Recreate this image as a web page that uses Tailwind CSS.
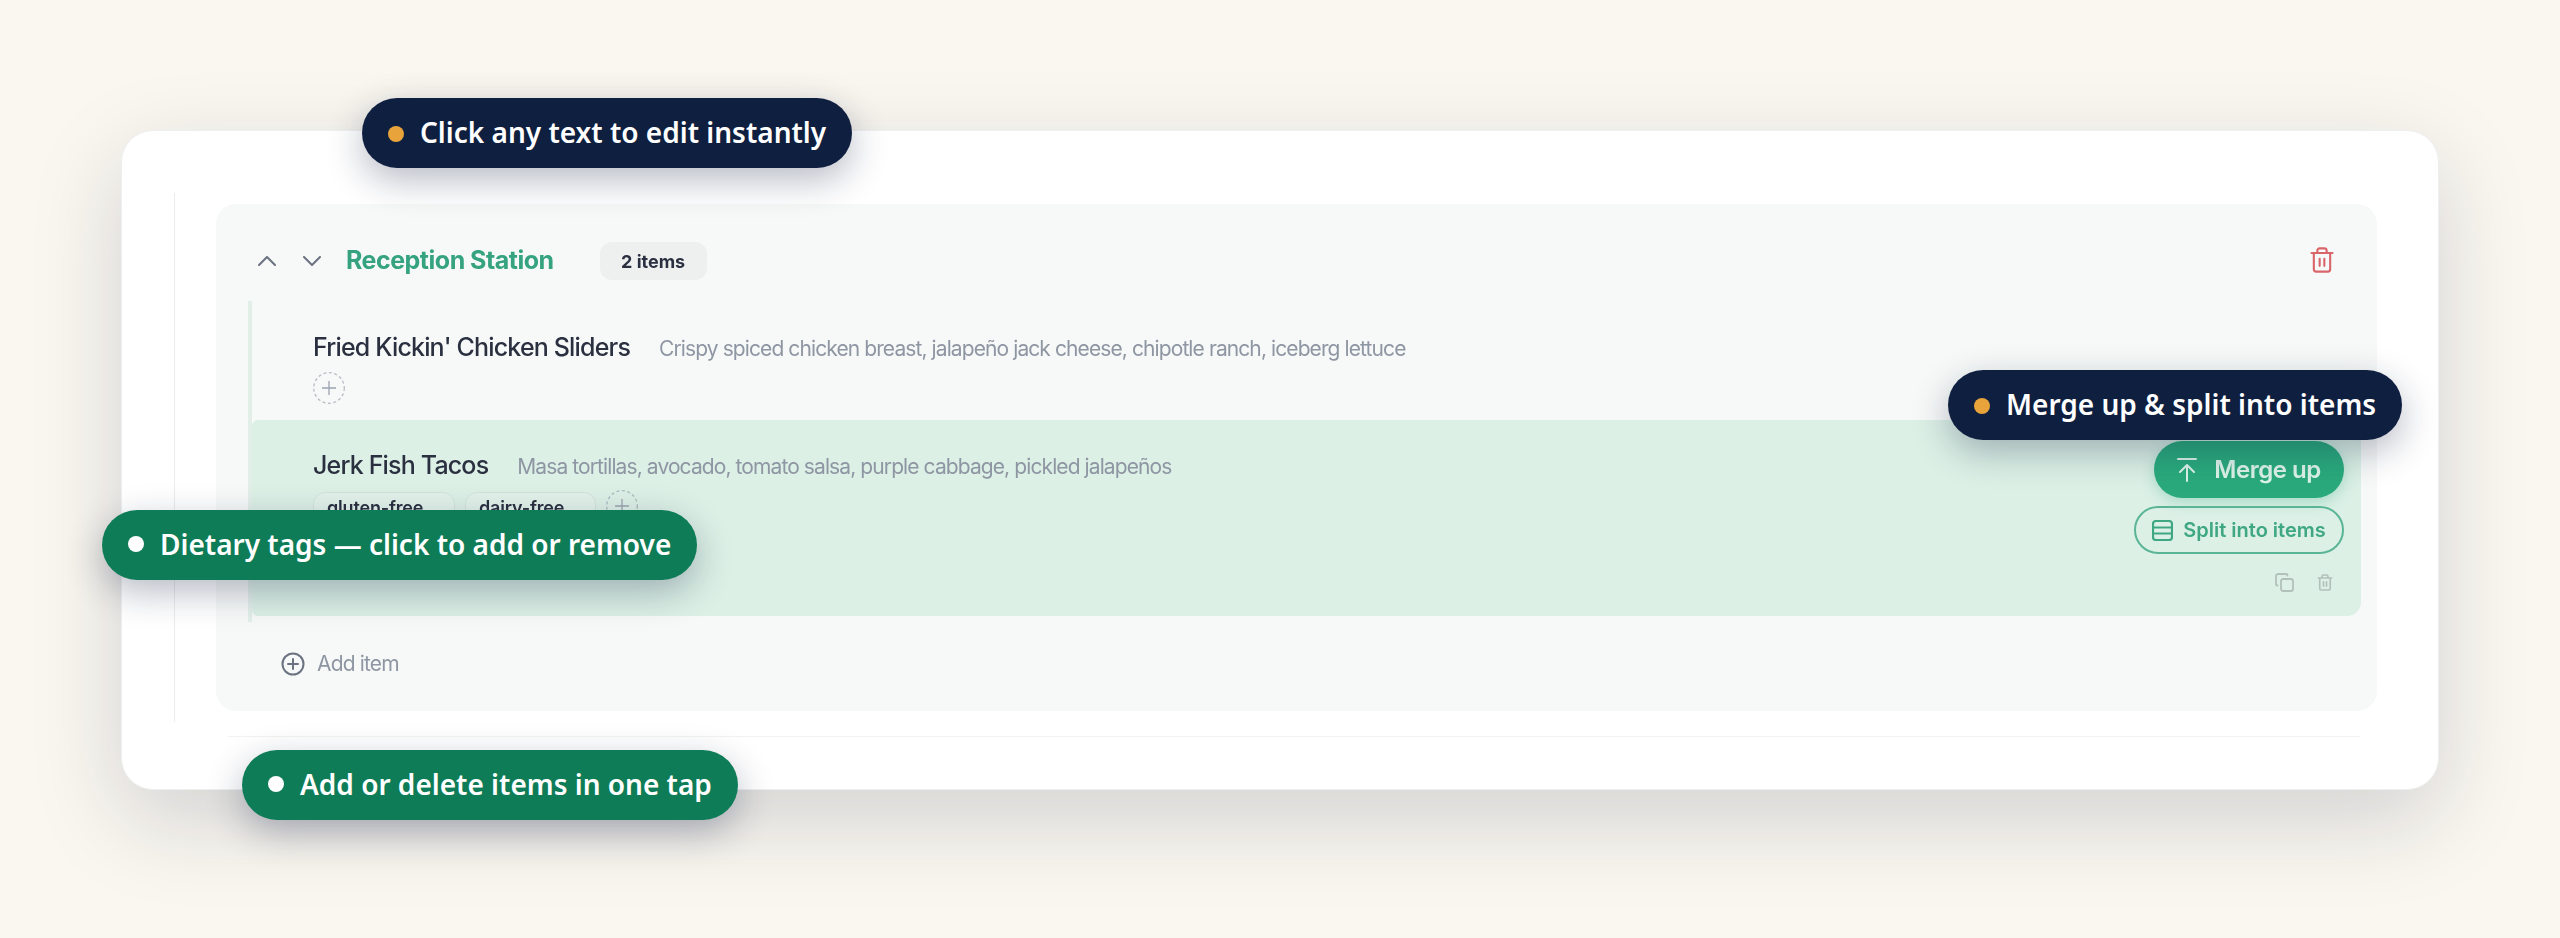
<!DOCTYPE html>
<html lang="en">
  <head>
    <meta charset="UTF-8" />
    <title>Menu editor</title>
    <script src="https://cdn.jsdelivr.net/npm/@tailwindcss/browser@4"></script>
  </head>
  <body class="bg-[#faf7f0] font-['Inter',sans-serif]">
    <main class="relative h-[938px] w-[2560px] overflow-hidden pt-[130px] pl-[121px]">
      <!-- card -->
      <section class="h-[660px] w-[2318px] rounded-[32px] border border-[#eeeff0] bg-white pt-[62px] pl-[52px] shadow-[0_30px_90px_rgba(15,31,64,0.17)]">
        <div class="blur-[0.6px]">
          <div class="h-[529px] w-[2200px] border-l border-[#ececec] pt-[11px] pl-[41px]">
            <div class="h-[507px] w-[2161px] rounded-[20px] bg-[#f7f9f8]">
              <!-- station header -->
              <header class="flex h-[97px] items-center pt-[17px] pr-[41px] pl-[42px]">
                <svg class="h-[10px] w-[18px] text-[#6b7280]" viewBox="0 0 18 10" fill="none" stroke="currentColor" stroke-width="2" stroke-linecap="round" stroke-linejoin="round"><path d="M1 9l8-8 8 8" /></svg>
                <svg class="ml-[27px] h-[10px] w-[18px] text-[#6b7280]" viewBox="0 0 18 10" fill="none" stroke="currentColor" stroke-width="2" stroke-linecap="round" stroke-linejoin="round"><path d="M1 1l8 8 8-8" /></svg>
                <h2 class="ml-[25px] text-[25px] font-bold tracking-[-0.02em] text-[#35a37f]">Reception Station</h2>
                <span class="ml-[46px] flex h-[38px] w-[107px] items-center justify-center rounded-[12px] bg-[#eef0f0] text-[18px] font-bold text-[#2b3040]">2 items</span>
                <svg class="-mt-[2px] ml-auto h-[28px] w-[28px] text-[#d9656a]" viewBox="0 0 24 24" fill="none" stroke="currentColor" stroke-width="1.8" stroke-linecap="round" stroke-linejoin="round"><path d="M3 6h18M5 6v14a2 2 0 0 0 2 2h10a2 2 0 0 0 2-2V6M8 6V4a2 2 0 0 1 2-2h4a2 2 0 0 1 2 2v2M10 11v6M14 11v6" /></svg>
              </header>

              <!-- items -->
              <div class="ml-[32px] h-[321px] w-[2113px] border-l-4 border-[#e2efe9]">
                <div class="h-[119px] pt-[30px] pl-[61px]">
                  <div class="flex items-baseline gap-[29px]">
                    <h3 class="text-[25px] leading-[32px] font-medium tracking-[-0.033em] text-[#2b3040]">Fried Kickin' Chicken Sliders</h3>
                    <p class="text-[21px] tracking-[-0.043em] text-[#8f96a3]">Crispy spiced chicken breast, jalapeño jack cheese, chipotle ranch, iceberg lettuce</p>
                  </div>
                  <button class="mt-[7px] block h-[32px] w-[32px] text-[#9ca3af]">
                    <svg class="h-[32px] w-[32px]" viewBox="0 0 32 32" fill="none" stroke="currentColor" stroke-width="1.3"><circle cx="16" cy="16" r="15.300" stroke-dasharray="3 2.500" class="opacity-70" /><path d="M16 9v14M9 16h14" /></svg>
                  </button>
                </div>

                <div class="flex h-[196px] w-[2109px] justify-between rounded-l-[6px] rounded-r-[14px] bg-[#dcf0e6] pt-[21px] pr-[17px] pl-[61px]">
                  <div class="pt-[8px]">
                    <div class="flex items-baseline gap-[29px]">
                      <h3 class="text-[25px] leading-[32px] font-medium tracking-[-0.033em] text-[#2b3040]">Jerk Fish Tacos</h3>
                      <p class="text-[21px] tracking-[-0.043em] text-[#8f96a3]">Masa tortillas, avocado, tomato salsa, purple cabbage, pickled jalapeños</p>
                    </div>
                    <div class="mt-[9px] flex items-start gap-[10px]">
                      <span class="flex h-[36px] w-[142px] items-center rounded-[12px] border border-[#d0e4da] bg-[#e2f2ea] pb-[4px] pl-[13px] text-[18px] font-semibold tracking-[-0.01em] text-[#2b3040]">gluten-free</span>
                      <span class="flex h-[36px] w-[131px] items-center rounded-[12px] border border-[#d0e4da] bg-[#e2f2ea] pb-[4px] pl-[13px] text-[18px] font-semibold tracking-[-0.01em] text-[#2b3040]">dairy-free</span>
                      <button class="-mt-[2px] block h-[32px] w-[32px] text-[#9ca3af]">
                        <svg class="h-[32px] w-[32px]" viewBox="0 0 32 32" fill="none" stroke="currentColor" stroke-width="1.3"><circle cx="16" cy="16" r="15.300" stroke-dasharray="3 2.500" class="opacity-70" /><path d="M16 9v14M9 16h14" /></svg>
                      </button>
                    </div>
                  </div>

                  <div class="flex flex-col items-end">
                    <button class="flex h-[57px] w-[190px] items-center justify-center gap-[17px] rounded-full bg-[#2aaa7c] text-[24px] font-semibold tracking-[-0.02em] text-[#dcf3e9] shadow-[0_4px_14px_rgba(42,170,124,0.3)]">
                      <svg class="h-[24px] w-[20px]" viewBox="0 0 20 24" fill="none" stroke="currentColor" stroke-width="2" stroke-linecap="round" stroke-linejoin="round"><path d="M1 1h18M10 23V7M3 14l7-7 7 7" /></svg>
                      Merge up
                    </button>
                    <button class="mt-[8px] flex h-[48px] w-[210px] items-center justify-center gap-[10px] rounded-full border-2 border-[#5ab596] text-[20px] font-semibold text-[#3fa883]">
                      <svg class="h-[21px] w-[21px]" viewBox="0 0 21 21" fill="none" stroke="currentColor" stroke-width="2.2" stroke-linejoin="round"><rect x="1" y="1" width="19" height="19" rx="3" /><path d="M1 7.5h19M1 13.5h19" /></svg>
                      Split into items
                    </button>
                    <div class="mt-[19px] mr-[10px] flex gap-[22px] text-[#b2c0ba]">
                      <svg class="h-[19px] w-[19px]" viewBox="0 0 19 19" fill="none" stroke="currentColor" stroke-width="1.8" stroke-linejoin="round" stroke-linecap="round"><rect x="6" y="6" width="12" height="12" rx="2" /><path d="M2.5 12.5C1.5 12.5 1 12 1 11V3a2 2 0 0 1 2-2h8c1 0 1.500.5 1.500 1.500" /></svg>
                      <svg class="h-[19px] w-[18px]" viewBox="0 0 24 24" fill="none" stroke="currentColor" stroke-width="2.2" stroke-linecap="round" stroke-linejoin="round"><path d="M3 6h18M5 6v14a2 2 0 0 0 2 2h10a2 2 0 0 0 2-2V6M8 6V4a2 2 0 0 1 2-2h4a2 2 0 0 1 2 2v2M10 11v6M14 11v6" /></svg>
                    </div>
                  </div>
                </div>
              </div>

              <!-- add item -->
              <button class="mt-[26px] ml-[65px] flex items-center gap-[12px] text-[21px] tracking-[-0.04em] text-[#8f96a3]">
                <svg class="h-[24px] w-[24px] text-[#6b7280]" viewBox="0 0 24 24" fill="none" stroke="currentColor" stroke-width="2" stroke-linecap="round"><circle cx="12" cy="12" r="10.500" /><path d="M12 7v10M7 12h10" /></svg>
                Add item
              </button>
            </div>
          </div>
          <div class="mt-[14px] ml-[54px] h-[1px] w-[2132px] bg-[#f1f2f1]"></div>
        </div>
      </section>

      <!-- callouts sit over the card -->
      <div class="absolute top-[98px] left-[362px] flex h-[70px] items-center gap-[16px] rounded-full bg-[#0f1f40] px-[26px] pb-[2px] font-['Noto_Sans',sans-serif] text-[28px] font-semibold whitespace-nowrap text-white shadow-[0_12px_36px_rgba(15,31,64,0.3)]">
        <span class="mt-[4px] h-[16px] w-[16px] rounded-full bg-[#e8a33a]"></span>Click any text to edit instantly
      </div>
      <div class="absolute top-[370px] left-[1948px] flex h-[70px] items-center gap-[16px] rounded-full bg-[#0f1f40] px-[26px] pb-[2px] font-['Noto_Sans',sans-serif] text-[28px] font-semibold whitespace-nowrap text-white shadow-[0_12px_36px_rgba(15,31,64,0.3)]">
        <span class="mt-[4px] h-[16px] w-[16px] rounded-full bg-[#e8a33a]"></span>Merge up &amp; split into items
      </div>
      <div class="absolute top-[510px] left-[102px] flex h-[70px] items-center gap-[16px] rounded-full bg-[#0f7c58] px-[26px] pb-[2px] font-['Noto_Sans',sans-serif] text-[28px] font-semibold whitespace-nowrap text-white shadow-[0_12px_36px_rgba(15,31,64,0.3)]">
        <span class="h-[16px] w-[16px] rounded-full bg-white"></span>Dietary tags — click to add or remove
      </div>
      <div class="absolute top-[750px] left-[242px] flex h-[70px] items-center gap-[16px] rounded-full bg-[#0f7c58] px-[26px] pb-[2px] font-['Noto_Sans',sans-serif] text-[28px] font-semibold whitespace-nowrap text-white shadow-[0_12px_36px_rgba(15,31,64,0.3)]">
        <span class="h-[16px] w-[16px] rounded-full bg-white"></span>Add or delete items in one tap
      </div>
    </main>
  </body>
</html>
